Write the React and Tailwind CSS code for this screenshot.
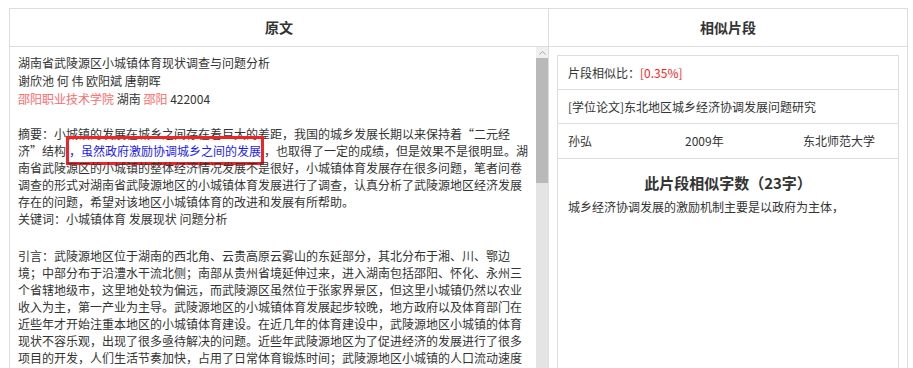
import React from "react";

const red = "text-[#ff6a6a]";

export default function App() {
	return (
		<div className="h-[368px] overflow-hidden bg-white pt-[8px] pl-[9px] font-['Noto_Sans_CJK_SC','Noto_Sans',sans-serif] text-[#333]">
			<div className="w-[899px] h-[420px] border border-[#dddddd] flex flex-col">
				{/* 表头 */}
				<div className="flex h-[38px] border-b border-[#dddddd] text-[14px] font-bold text-[#333]">
					<div className="w-[539px] border-r border-[#dddddd] flex items-center justify-center">
						原文
					</div>
					<div className="flex-1 flex items-center justify-center">相似片段</div>
				</div>

				<div className="flex flex-1 min-h-0">
					{/* 原文 */}
					<div className="w-[539px] border-r border-[#dddddd] flex">
						<div className="flex-1 overflow-hidden pl-[8px] pr-[5px] pt-[7px] text-[12px] leading-[17px]">
							<div className="leading-[18px]">
								<p>湖南省武陵源区小城镇体育现状调查与问题分析</p>
								<p>谢欣池 何 伟 欧阳斌 唐朝晖</p>
								<p>
									<span className={red}>邵阳职业技术学院</span> 湖南{" "}
									<span className={red}>邵阳</span> 422004
								</p>
							</div>
							<p className="mt-[17px]">
								摘要：小城镇的发展在城乡之间存在着巨大的差距，我国的城乡发展长期以来保持着“二元经济”结构
								<span className="border-[3px] border-[#f02424] py-[3px] text-[#1c1cf0]">
									，虽然政府激励协调城乡之间的发展
								</span>
								，也取得了一定的成绩，但是效果不是很明显。湖南省武陵源区的小城镇的整体经济情况发展不是很好，小城镇体育发展存在很多问题，笔者问卷调查的形式对湖南省武陵源地区的小城镇体育发展进行了调查，认真分析了武陵源地区经济发展存在的问题，希望对该地区小城镇体育的改进和发展有所帮助。
							</p>
							<p>关键词：小城镇体育 发展现状 问题分析</p>
							<p className="mt-[20px]">
								引言：武陵源地区位于湖南的西北角、云贵高原云雾山的东延部分，其北分布于湘、川、鄂边境；中部分布于沿澧水干流北侧；南部从贵州省境延伸过来，进入湖南包括邵阳、怀化、永州三个省辖地级市，这里地处较为偏远，而武陵源区虽然位于张家界景区，但这里小城镇仍然以农业收入为主，第一产业为主导。武陵源地区的小城镇体育发展起步较晚，地方政府以及体育部门在近些年才开始注重本地区的小城镇体育建设。在近几年的体育建设中，武陵源地区小城镇的体育现状不容乐观，出现了很多亟待解决的问题。近些年武陵源地区为了促进经济的发展进行了很多项目的开发，人们生活节奏加快，占用了日常体育锻炼时间；武陵源地区小城镇的人口流动速度加快，青壮年外出务工较多，留守人员以老人和儿童为主，小城镇体育人口较少。
							</p>
						</div>

						{/* 滚动条 */}
						<div className="w-[12px] flex flex-col">
							<div className="h-[11px] bg-[#f0f0f0] flex items-center justify-center">
								<svg width="7" height="4" viewBox="0 0 7 4">
									<polyline points="0.5,3.5 3.5,0.5 6.5,3.5" fill="none" stroke="#a3a3a3" strokeWidth="1" />
								</svg>
							</div>
							<div className="h-[125px] bg-[#b9b9b9]" />
							<div className="flex-1 bg-[#e4e4e4]" />
						</div>
					</div>

					{/* 相似片段 */}
					<div className="flex-1 p-[8px]">
						<div className="h-full border border-[#dddddd] text-[12px] text-[#333]">
							<div className="h-[34px] border-b border-[#dddddd] px-[10px] flex items-center">
								片段相似比：<span className="text-[#ff1a1a]">[0.35%]</span>
							</div>
							<div className="h-[34px] border-b border-[#dddddd] px-[10px] flex items-center">
								[学位论文]东北地区城乡经济协调发展问题研究
							</div>
							<div className="h-[35px] border-b border-[#dddddd] px-[10px] grid grid-cols-[117px_118px_1fr] items-center">
								<span>孙弘</span>
								<span>2009年</span>
								<span>东北师范大学</span>
							</div>
							<h3 className="mt-[14px] text-center text-[15px] font-bold leading-[20px]">
								此片段相似字数（23字）
							</h3>
							<p className="mt-[5px] px-[10px] leading-[17px]">
								城乡经济协调发展的激励机制主要是以政府为主体，
							</p>
						</div>
					</div>
				</div>
			</div>
		</div>
	);
}
